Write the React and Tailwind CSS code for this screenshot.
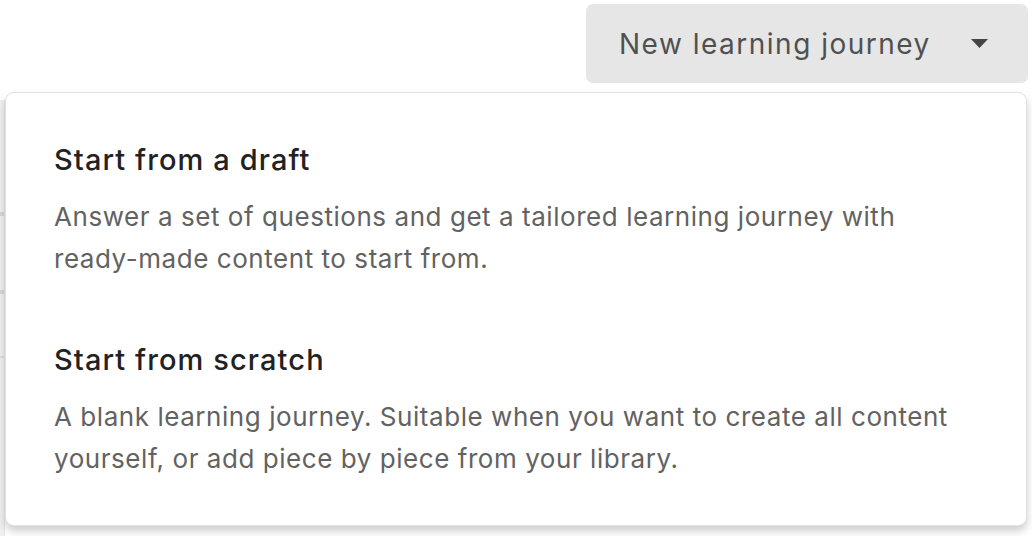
import React from 'react';

const options = [
  {
    title: 'Start from a draft',
    text: 'Answer a set of questions and get a tailored learning journey with ready-made content to start from.',
  },
  {
    title: 'Start from scratch',
    text: 'A blank learning journey. Suitable when you want to create all content yourself, or add piece by piece from your library.',
  },
];

export default function App() {
  return (
    <div className="w-[1032px] h-[536px] bg-white overflow-hidden flex flex-col font-['Inter',sans-serif]">
      <div className="flex justify-end pt-[4px] pr-[4px] h-[92px]">
        <button className="w-[442px] h-[79px] bg-[#e6e6e6] rounded-[7px] flex items-center pl-[33px] pr-[40px] text-[28px] tracking-[1.5px] text-[#505050]">
          <span className="flex-1 text-left">New learning journey</span>
          <svg width="17" height="9" viewBox="0 0 17 9">
            <path d="M0 0 L17 0 L8.5 9 Z" fill="#444444" />
          </svg>
        </button>
      </div>

      <div className="flex flex-1">
        {/* content peeking out behind the menu */}
        <div className="w-[5px] mt-[8px] bg-[#f0f0f0] border-r border-[#e6e6e6] flex flex-col">
          <div className="h-[112px]" />
          <div className="h-[4px] bg-[#d6d6d6]" />
          <div className="h-[74px]" />
          <div className="h-[4px] bg-[#d6d6d6]" />
          <div className="h-[62px]" />
          <div className="h-[2px] bg-[#dcdcdc]" />
        </div>

        <div className="flex-1 mr-[5px] mb-[10px] bg-white border border-[#e2e2e2] rounded-[9px] shadow-[0_5px_9px_rgba(0,0,0,0.2)] pl-[48px] pr-[60px] pt-[47px] flex flex-col gap-[60px]">
          {options.map((o) => (
            <div key={o.title} className="cursor-pointer">
              <div className="text-[29px] leading-[40px] font-medium tracking-[1.1px] text-[#222222]">{o.title}</div>
              <p className="mt-[16px] text-[26px] leading-[42px] tracking-[0.55px] text-[#626262]">{o.text}</p>
            </div>
          ))}
        </div>
      </div>
    </div>
  );
}
